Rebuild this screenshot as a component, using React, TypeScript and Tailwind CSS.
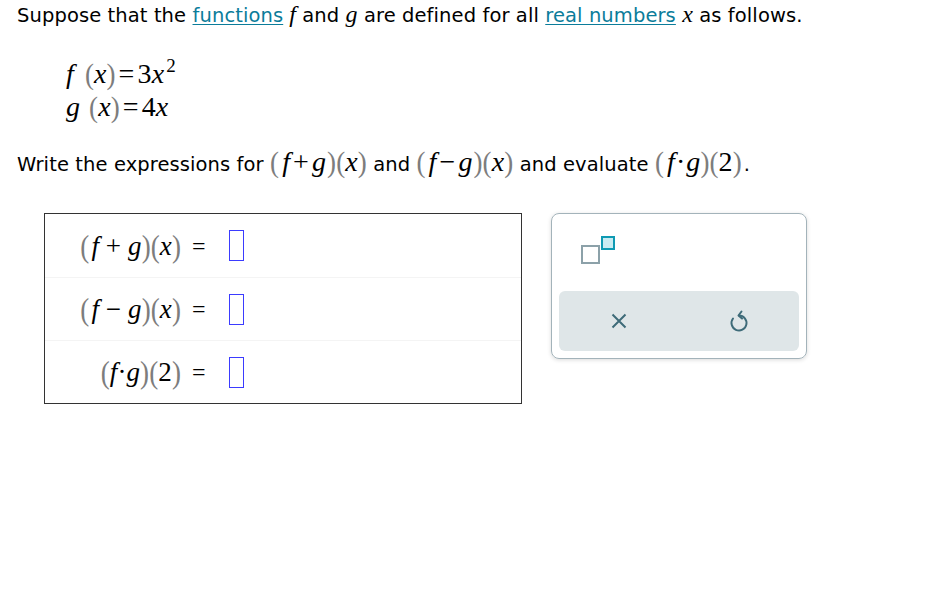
import React from "react";

const serif = "font-['Liberation_Serif','Times_New_Roman',serif]";

// grey stretched bracket, like the reference's math renderer
const Br = ({ c, big }: { c: string; big?: boolean }) => (
  <span
    className={`text-[#7d7d7d] not-italic leading-none inline-block ${
      big ? "text-[27px] scale-y-[1.18]" : "text-[27px] scale-y-[1.12]"
    }`}
  >
    {c}
  </span>
);

const V = ({ children, cls = "" }: { children: React.ReactNode; cls?: string }) => (
  <span className={`italic inline-block ${cls}`}>{children}</span>
);

const Op = ({ children, cls = "mx-[3px]" }: { children: React.ReactNode; cls?: string }) => (
  <span className={`inline-block ${cls}`}>{children}</span>
);

const Blank = () => <span className="inline-block w-[15px] h-[31px] border-[1.5px] border-[#3b3bff]" />;

const AnswerRow = ({ label, first }: { label: React.ReactNode; first?: boolean }) => (
  <div className={`flex items-center h-[63px] ${first ? "" : "border-t border-[#f4f4f4]"}`}>
    <div className={`${serif} text-[27px] leading-[40px] text-black w-[136px] text-right whitespace-nowrap`}>{label}</div>
    <span className={`${serif} text-[24px] ml-[11px]`}>=</span>
    <span className="ml-[23px] flex">
      <Blank />
    </span>
  </div>
);

const Inline = ({ children }: { children: React.ReactNode }) => (
  <span className={`${serif} text-[28px]`}>{children}</span>
);

const App = () => {
  return (
    <div className="w-[948px] h-[602px] bg-white font-['DejaVu_Sans',sans-serif] text-[19.5px] tracking-[0.1px] text-black px-[17px] pt-[2px]">
      <p className="leading-[24px] whitespace-nowrap">
        Suppose that the{" "}
        <a className="text-[#0b7c9a] underline underline-offset-2">functions</a>
        <span className={`${serif} italic text-[24px]`}> f </span>and{" "}
        <span className={`${serif} italic text-[24px]`}>g</span> are defined for all{" "}
        <a className="text-[#0b7c9a] underline underline-offset-2">real numbers</a>{" "}
        <span className={`${serif} italic text-[24px]`}>x</span> as follows.
      </p>

      <div className={`${serif} text-[28px] ml-[49px] mt-[29px] leading-[33px] whitespace-nowrap`}>
        <div>
          <V cls="mr-[11px]">f</V>
          <Br c="(" />
          <V>x</V>
          <Br c=")" />
          <Op cls="mx-[3px]">=</Op>3<V>x</V>
          <sup className="text-[19px] relative -top-[11px] ml-[2px]">2</sup>
        </div>
        <div>
          <V cls="mr-[9px]">g</V>
          <Br c="(" />
          <V>x</V>
          <Br c=")" />
          <Op cls="mx-[3px]">=</Op>4<V>x</V>
        </div>
      </div>

      <p className="mt-[23px] leading-[32px] whitespace-nowrap">
        Write the expressions for{" "}
        <Inline>
          <Br c="(" />
          <V cls="ml-[3px]">f</V>
          <Op>+</Op>
          <V cls="mr-[1px]">g</V>
          <Br c=")" />
          <Br c="(" />
          <V>x</V>
          <Br c=")" />
        </Inline>{" "}
        and{" "}
        <Inline>
          <Br c="(" />
          <V cls="ml-[3px]">f</V>
          <Op>−</Op>
          <V cls="mr-[1px]">g</V>
          <Br c=")" />
          <Br c="(" />
          <V>x</V>
          <Br c=")" />
        </Inline>{" "}
        and evaluate{" "}
        <Inline>
          <Br c="(" />
          <V cls="ml-[3px]">f</V>
          <Op cls="mx-[1px]">·</Op>
          <V>g</V>
          <Br c=")" />
          <Br c="(" />2<Br c=")" />
        </Inline>
        <span className="ml-[2px]">.</span>
      </p>

      <div className="flex items-start mt-[32px] ml-[27px] gap-[29px]">
        <div className="w-[478px] h-[191px] border border-[#333]">
          <AnswerRow
            first
            label={
              <>
                <Br big c="(" />
                <V cls="ml-[2px]">f</V> + <V>g</V>
                <Br big c=")" />
                <Br big c="(" />
                <V>x</V>
                <Br big c=")" />
              </>
            }
          />
          <AnswerRow
            label={
              <>
                <Br big c="(" />
                <V cls="ml-[2px]">f</V> − <V>g</V>
                <Br big c=")" />
                <Br big c="(" />
                <V>x</V>
                <Br big c=")" />
              </>
            }
          />
          <AnswerRow
            label={
              <>
                <Br big c="(" />
                <V>f</V>
                <Op cls="mx-0">·</Op>
                <V>g</V>
                <Br big c=")" />
                <Br big c="(" />2<Br big c=")" />
              </>
            }
          />
        </div>

        <div className="w-[256px] h-[146px] border-[1.5px] border-[#a3b3ba] rounded-[8px] shadow-[0_1px_4px_rgba(0,0,0,0.15)] px-[7px] pb-[7px] flex flex-col">
          <div className="flex-1 pl-[22px] pt-[22px]">
            <svg width="36" height="30" viewBox="0 0 36 30">
              <rect x="1" y="10" width="17" height="17" fill="white" stroke="#8ca1a9" strokeWidth="2" />
              <rect x="21" y="1" width="12" height="12" fill="#c9ecf2" stroke="#0e9ab3" strokeWidth="2" />
            </svg>
          </div>
          <div className="h-[60px] bg-[#dfe6e8] rounded-[6px] flex">
            <button className="flex-1 flex items-center justify-center">
              <svg width="20" height="20" viewBox="0 0 20 20">
                <path d="M3.5 3.5 L16.5 16.5 M16.5 3.5 L3.5 16.5" stroke="#3e6b79" strokeWidth="2" fill="none" />
              </svg>
            </button>
            <button className="flex-1 flex items-center justify-center">
              <svg width="22" height="24" viewBox="0 0 22 24">
                <path d="M11 6.5 A7.5 7.5 0 1 1 5 9.5" stroke="#3e6b79" strokeWidth="2" fill="none" strokeLinecap="round" />
                <path d="M13.5 2.5 L10.5 6.5 L14 9.5" stroke="#3e6b79" strokeWidth="2" fill="none" strokeLinecap="round" strokeLinejoin="round" />
              </svg>
            </button>
          </div>
        </div>
      </div>
    </div>
  );
};

export default App;
